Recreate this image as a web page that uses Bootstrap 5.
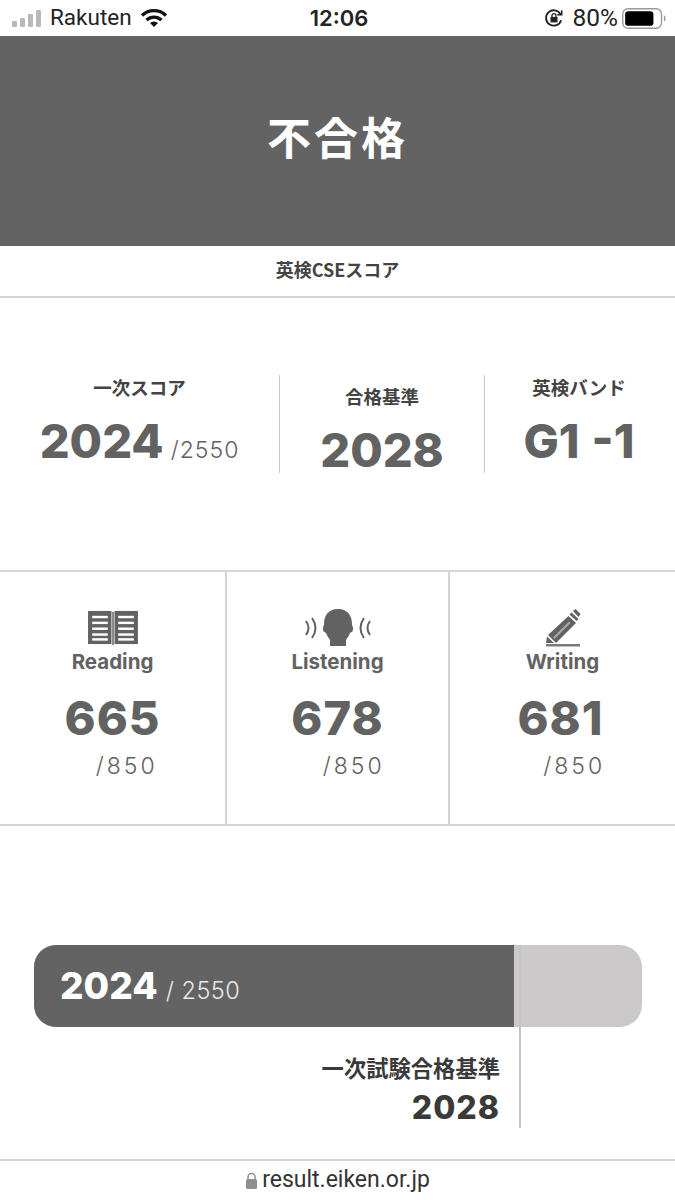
<!DOCTYPE html>
<html lang="ja">
<head>
  <meta charset="UTF-8">
  <title>英検CSEスコア</title>
  <meta name="viewport" content="width=device-width, initial-scale=1">
  <link href="https://cdn.jsdelivr.net/npm/bootstrap@5.3.0/dist/css/bootstrap.min.css" rel="stylesheet">
  <style>
    body { width: 675px; height: 1200px; overflow: hidden; background: #fff; color: #626262; font-family: Inter, "Noto Sans CJK JP", sans-serif; }
    .status-bar { height: 36px; padding: 0 9px 0 12px; color: #222; font-family: Roboto, Inter, sans-serif; font-size: 22.500px; }
    .status-side { width: 250px; }
    .status-pct { font-size: 24.500px; }
    .status-time { font-family: Inter, sans-serif; font-weight: 600; font-size: 22px; }
    .hero { height: 210px; background: #636363; color: #fff; font-family: "Noto Sans CJK JP", sans-serif; font-weight: 700; font-size: 44px; letter-spacing: 3px; padding-bottom: 10px; }
    .sub-head { height: 52px; border-bottom: 2px solid #d4d4d4; font-family: "Noto Sans CJK JP", sans-serif; font-weight: 700; font-size: 18px; color: #444; padding-bottom: 4px; }
    .summary { height: 274px; border-bottom: 2px solid #d4d4d4; padding-top: 77px; }
    .sum-cell { height: 98px; text-align: center; }
    .sum-a { width: 280px; border-right: 1px solid #c9c9c9; }
    .sum-b { width: 205px; border-right: 1px solid #c9c9c9; }
    .sum-c { width: 190px; padding-right: 2px; }
    .sum-label { font-family: "Noto Sans CJK JP", sans-serif; font-weight: 700; font-size: 18.500px; line-height: 24px; color: #444; }
    .label-low { margin-top: 9px; }
    .sum-num { font-weight: 800; font-size: 47px; line-height: 56px; margin-top: 14px; color: #626262; }
    .sum-max { font-weight: 300; font-size: 23px; letter-spacing: 1px; margin-left: 7px; }
    .band-gap { margin-left: 12px; }
    .skills { height: 254px; border-bottom: 2px solid #d4d4d4; }
    .skill { height: 100%; padding-top: 37px; }
    .skill-r { width: 227px; border-right: 2px solid #d4d4d4; }
    .skill-l { width: 223px; border-right: 2px solid #d4d4d4; }
    .skill-w { width: 225px; }
    .skill-icon { height: 38px; }
    .skill-name { font-weight: 700; font-size: 20.500px; line-height: 26px; margin-top: 2px; }
    .skill-num { font-weight: 800; font-size: 47px; line-height: 54px; margin-top: 16px; letter-spacing: 1px; }
    .skill-max { font-weight: 300; font-size: 23px; line-height: 28px; letter-spacing: 3px; margin-top: 7px; }
    .shift-w { margin-right: 4px; }
    .max-l { padding-left: 4px; }
    .max-w { padding-left: 14px; }
    .chart { position: relative; height: 335px; padding: 119px 33px 0 34px; border-bottom: 2px solid #d4d4d4; }
    .bar-bg { height: 82px; border-radius: 22px; background: #cbc9ca; overflow: hidden; }
    .bar-fill { background: #636363; color: #fff; padding: 0 0 0 26px; }
    .bar-num { font-weight: 800; font-size: 37px; }
    .bar-max { font-weight: 300; font-size: 23.500px; letter-spacing: .5px; margin-left: 8px; padding-top: 9px; color: #e8e8e8; }
    .mark-line { position: absolute; left: 519px; top: 119px; width: 2px; height: 183px; background: #c4c4c4; }
    .mark-text { width: 466px; text-align: right; margin-top: 25px; color: #3a3a3a; }
    .mark-label { font-family: "Noto Sans CJK JP", sans-serif; font-weight: 700; font-size: 22.300px; line-height: 30px; }
    .mark-num { font-weight: 800; font-size: 32px; line-height: 51px; letter-spacing: 1px; }
    .url-bar { height: 38px; color: #333; font-family: Roboto, sans-serif; font-size: 23px; gap: 4px; }
  </style>
</head>
<body>

  <!-- Barra de estado -->
  <div class="status-bar d-flex align-items-center justify-content-between">
    <div class="status-side d-flex align-items-center gap-2">
      <svg width="30" height="18" viewBox="0 0 30 18" fill="#b9b9b9"><rect x="0" y="12" width="5" height="6" rx="1"/><rect x="8" y="9" width="5" height="9" rx="1"/><rect x="16" y="5" width="5" height="13" rx="1"/><rect x="24" y="1" width="5" height="17" rx="1"/></svg>
      <span>Rakuten</span>
      <svg width="28" height="20" viewBox="0 0 28 20" fill="none" stroke="#111" stroke-width="3.200"><path d="M2 7.500a17 17 0 0 1 24 0"/><path d="M6.500 12a11 11 0 0 1 15 0"/><path d="M14 19l-4-4a6 6 0 0 1 8 0z" fill="#111" stroke="none"/></svg>
    </div>
    <div class="status-time">12:06</div>
    <div class="status-side d-flex align-items-center justify-content-end gap-1">
      <svg class="me-1" width="22" height="22" viewBox="0 0 20 20" fill="none" stroke="#222" stroke-width="1.700"><path d="M16.500 12a7 7 0 1 1-.6-5.500"/><path d="M17 3v4h-4" stroke-width="1.400"/><rect x="6.800" y="9" width="6.400" height="5" fill="#222" stroke="none"/><path d="M8.200 9V7.800a1.800 1.800 0 0 1 3.600 0V9" stroke-width="1.200"/></svg>
      <span class="status-pct">80%</span>
      <svg width="44" height="21" viewBox="0 0 42 20"><rect x="0.700" y="0.700" width="37" height="18.600" rx="5" fill="none" stroke="#999" stroke-width="1.300"/><rect x="3" y="3" width="27" height="14" rx="3" fill="#000"/><path d="M40 7v6a3 3 0 0 0 1.500-3 3 3 0 0 0-1.500-3z" fill="#999"/></svg>
    </div>
  </div>

  <div class="hero d-flex align-items-center justify-content-center">不合格</div>
  <div class="sub-head d-flex align-items-center justify-content-center">英検CSEスコア</div>

  <!-- Resumen de puntajes -->
  <div class="summary d-flex">
    <div class="sum-cell sum-a">
      <div class="sum-label">一次スコア</div>
      <div class="sum-num"><span>2024</span><span class="sum-max">/2550</span></div>
    </div>
    <div class="sum-cell sum-b">
      <div class="sum-label label-low">合格基準</div>
      <div class="sum-num">2028</div>
    </div>
    <div class="sum-cell sum-c">
      <div class="sum-label">英検バンド</div>
      <div class="sum-num">G1<span class="band-gap">-1</span></div>
    </div>
  </div>

  <!-- Puntajes por habilidad -->
  <div class="skills d-flex">
    <div class="skill skill-r text-center">
      <div class="skill-icon">
        <svg width="52" height="37" viewBox="0 0 50 38" preserveAspectRatio="none" fill="#626262"><path d="M1 2h22.500v34H1z"/><path d="M26.500 2H49v34H26.500z"/><path d="M24 3h2v34h-2z" fill="#8a8a8a"/><g fill="#fff"><rect x="5" y="7" width="15" height="2.500"/><rect x="5" y="13" width="15" height="2.500"/><rect x="5" y="19" width="15" height="2.500"/><rect x="5" y="25" width="15" height="2.500"/><rect x="5" y="30" width="15" height="2.500"/><rect x="30" y="7" width="15" height="2.500"/><rect x="30" y="13" width="15" height="2.500"/><rect x="30" y="19" width="15" height="2.500"/><rect x="30" y="25" width="15" height="2.500"/><rect x="30" y="30" width="15" height="2.500"/></g></svg>
      </div>
      <div class="skill-name">Reading</div>
      <div class="skill-num">665</div>
      <div class="skill-max">&nbsp;&nbsp;&nbsp;/850</div>
    </div>
    <div class="skill skill-l text-center">
      <div class="skill-icon">
        <svg width="68" height="38" viewBox="0 0 68 38" fill="none" stroke="#626262" stroke-width="2"><path d="M2 12q5 7 0 14M8 9q7 10 0 20"/><path d="M66 12q-5 7 0 14M60 9q-7 10 0 20"/><path d="M34 0c10 0 14 7 14 15 0 2 1.500 3 1 6-.5 2-2 2-3 3-1 3-3 5-4 7v6H26v-6c-1-2-3-4-4-7-1-1-2.500-1-3-3-.5-3 1-4 1-6C20 7 24 0 34 0z" fill="#626262" stroke="none"/></svg>
      </div>
      <div class="skill-name">Listening</div>
      <div class="skill-num">678</div>
      <div class="skill-max max-l">&nbsp;&nbsp;&nbsp;/850</div>
    </div>
    <div class="skill skill-w text-center">
      <div class="skill-icon">
        <svg width="36" height="38" viewBox="0 0 36 38"><path d="M28 2l2.500-2 5 5-2 3z" fill="#626262"/><path d="M26.500 3.500l7 6.500-2 2-7-6.500z" fill="#626262"/><path d="M23.500 7l7.500 7-20 20-8-8z" fill="#626262"/><path d="M24 12.500l1.500 1.500-16 16-1.500-1.500z" fill="#aaa"/><path d="M2 27.500l7 6.500H1z" fill="#626262"/><rect x="1" y="35" width="34" height="2.500" fill="#7a7a7a"/></svg>
      </div>
      <div class="skill-name">Writing</div>
      <div class="skill-num shift-w">681</div>
      <div class="skill-max max-w">&nbsp;/850</div>
    </div>
  </div>

  <!-- Barra del resultado -->
  <div class="chart">
    <div class="bar-bg d-flex">
      <div class="bar-fill d-flex align-items-center" style="width: 79%">
        <span class="bar-num">2024</span><span class="bar-max">/ 2550</span>
      </div>
    </div>
    <div class="mark-line"></div>
    <div class="mark-text">
      <div class="mark-label">一次試験合格基準</div>
      <div class="mark-num">2028</div>
    </div>
  </div>

  <div class="url-bar d-flex align-items-center justify-content-center">
    <svg width="13" height="17" viewBox="0 0 13 17"><path d="M3 8V5a3.500 3.500 0 0 1 7 0v3" fill="none" stroke="#8f8f8f" stroke-width="1.500"/><rect x="1" y="7" width="11" height="10" rx="1.500" fill="#8f8f8f"/></svg>
    <span>result.eiken.or.jp</span>
  </div>

  <script src="https://cdn.jsdelivr.net/npm/bootstrap@5.3.0/dist/js/bootstrap.bundle.min.js"></script>
</body>
</html>
